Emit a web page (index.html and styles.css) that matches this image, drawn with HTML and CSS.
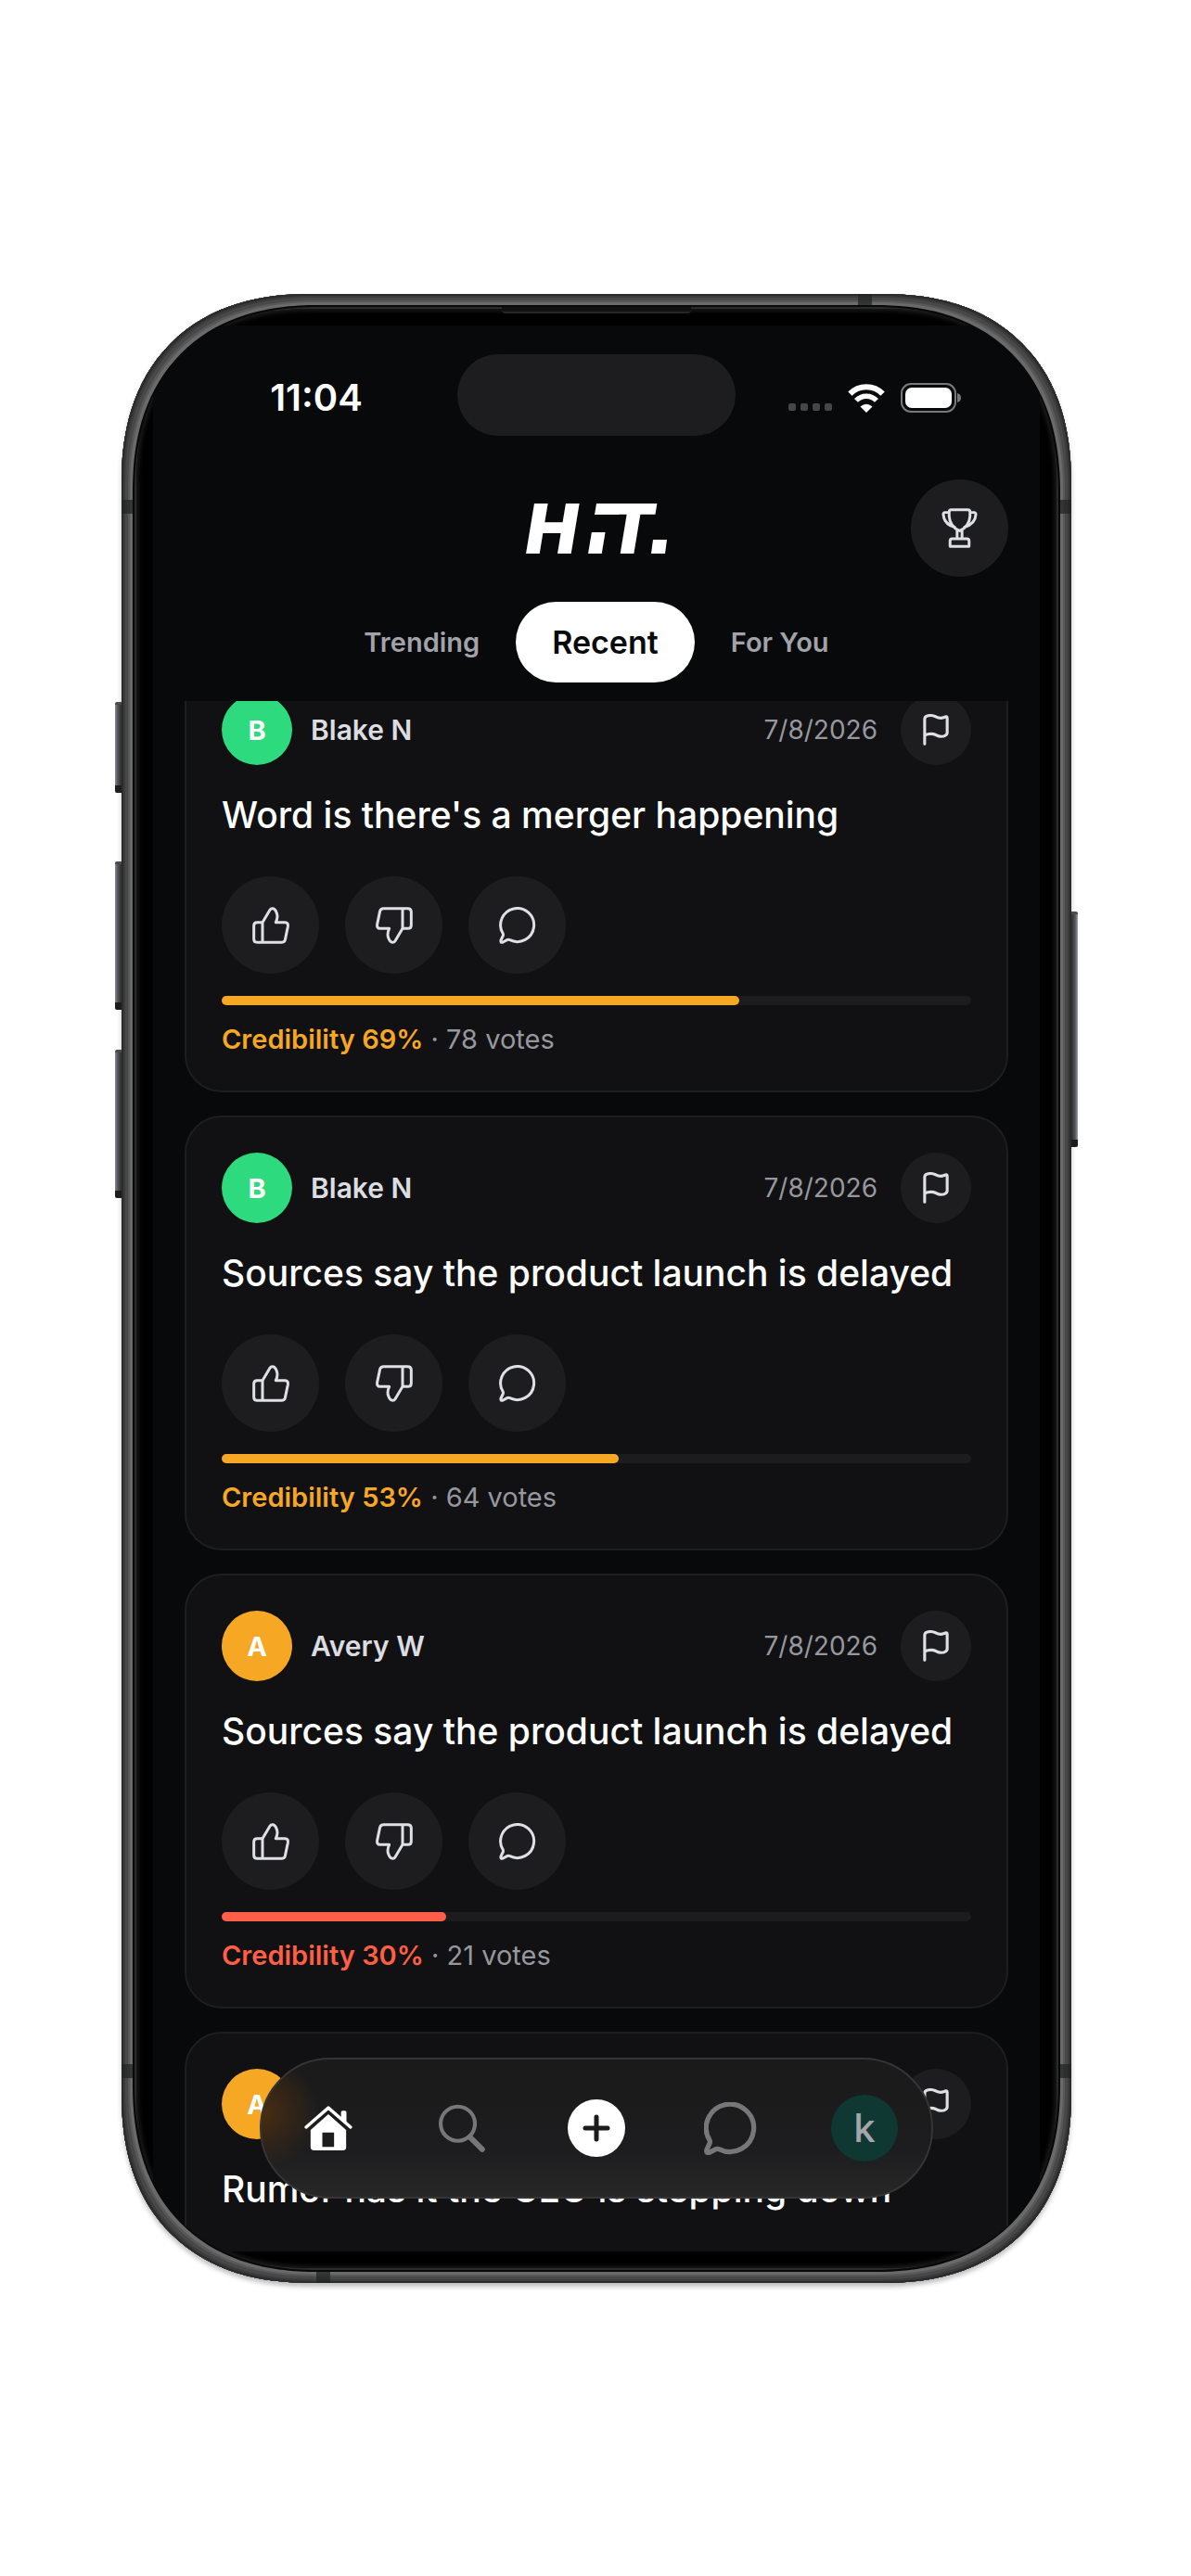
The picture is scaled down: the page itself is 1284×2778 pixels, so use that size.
FILE: index.html
```html
<!DOCTYPE html>
<html lang="en">
<head>
<meta charset="UTF-8">
<meta name="viewport" content="width=device-width, initial-scale=1.0">
<title>HiT. - Recent</title>
<link rel="stylesheet" href="styles.css">
</head>
<body>
<!-- shared icons -->
<svg class="sprite" aria-hidden="true">
  <symbol id="icon-up" viewBox="0 0 120 120">
    <path d="M33 50H16Q5 50 5 61V104Q5 115 17 115H94Q104 115 106 107L115 64Q117 50 106 50H76Q84 34 79 20Q74 5 65 5Q60 5 57 10L33 50V115"/>
  </symbol>
  <symbol id="icon-down" viewBox="0 0 120 120">
    <path transform="rotate(180 60 60)" d="M33 50H16Q5 50 5 61V104Q5 115 17 115H94Q104 115 106 107L115 64Q117 50 106 50H76Q84 34 79 20Q74 5 65 5Q60 5 57 10L33 50V115"/>
  </symbol>
  <symbol id="icon-chat" viewBox="0 0 120 120">
    <path d="M13 87A54 54 0 1 1 35 107Q30 105 26 107L13 114Q4 117 6 108L13 93Q14 90 13 87Z"/>
  </symbol>
  <symbol id="icon-flag" viewBox="0 0 80 98">
    <path d="M5 93V16Q5 8 13 6Q25 2 39 8Q52 15 64 11Q75 5 75 12V58Q75 65 67 68Q54 73 40 65Q24 58 5 66"/>
  </symbol>
  <symbol id="icon-trophy" viewBox="0 0 116 130">
    <path d="M31 5H85Q92 5 92 12V26Q90 60 58 74Q26 60 24 26V12Q24 5 31 5ZM24 14H11Q5 14 5 21Q7 52 42 62M92 14H105Q111 14 111 21Q109 52 74 62M50 73V99M66 73V99M34 100H82Q89 100 89 107V125H27V107Q27 100 34 100Z"/>
  </symbol>
</svg>

<main class="stage">
  <div class="phone">
    <span class="key key-action"></span>
    <span class="key key-volume-up"></span>
    <span class="key key-volume-down"></span>
    <span class="key key-power"></span>
    <span class="band band-top"></span>
    <span class="band band-bottom"></span>
    <span class="band band-left-top"></span>
    <span class="band band-left-bottom"></span>
    <span class="band band-right-top"></span>
    <span class="band band-right-bottom"></span>
    <span class="speaker"></span>

    <div class="bezel">
      <div class="screen">
        <div class="status-bar">
          <span class="time">11:04</span>
          <span class="island"></span>
          <div class="status-icons">
            <span class="dots"><i></i><i></i><i></i><i></i></span>
            <svg class="wifi" viewBox="0 0 116 90" aria-hidden="true">
              <path d="M7 31A71 71 0 0 1 109 31" fill="none" stroke="#fff" stroke-width="18"/>
              <path d="M26 52A44 44 0 0 1 90 52" fill="none" stroke="#fff" stroke-width="16"/>
              <path d="M58 90L39 71Q58 55 77 71Z" fill="#fff"/>
            </svg>
            <svg class="battery" viewBox="0 0 66 32" aria-hidden="true">
              <rect x="1" y="1" width="58" height="30" rx="10" fill="none" stroke="#78797b" stroke-width="2"/>
              <rect x="5" y="5" width="50" height="22" rx="7" fill="#fff"/>
              <path d="M61 11Q65 12 65 16Q65 20 61 21Z" fill="#78797b"/>
            </svg>
          </div>
        </div>

        <header class="top-bar">
          <svg class="logo" viewBox="0 0 160 70" role="img" aria-label="HiT.">
            <text class="logo-text" y="62" x="4 71 91">HIT</text>
            <path class="logo-shape" d="M90 8H106L104 20H88Z"/>
            <path class="logo-notch" d="M68 20H102L99 39H68Z"/>
            <path class="logo-shape" d="M141 47H156L154 62H139Z"/>
          </svg>
          <button class="round-button trophy-button" aria-label="Leaderboard"><svg class="trophy"><use href="#icon-trophy"/></svg></button>
        </header>

        <nav class="tabs">
          <button class="tab">Trending</button>
          <button class="tab active">Recent</button>
          <button class="tab">For You</button>
        </nav>

        <section class="feed">
          <article class="card">
            <div class="card-header">
              <span class="avatar green">B</span>
              <span class="name">Blake N</span>
              <span class="date">7/8/2026</span>
              <button class="round-button small" aria-label="Report"><svg class="flag"><use href="#icon-flag"/></svg></button>
            </div>
            <h2 class="rumor">Word is there's a merger happening</h2>
            <div class="actions">
              <button class="round-button" aria-label="Believe"><svg class="icon"><use href="#icon-up"/></svg></button>
              <button class="round-button" aria-label="Doubt"><svg class="icon"><use href="#icon-down"/></svg></button>
              <button class="round-button" aria-label="Comment"><svg class="icon"><use href="#icon-chat"/></svg></button>
            </div>
            <div class="meter"><div class="meter-fill orange" style="width: 69%"></div></div>
            <p class="credibility"><b class="orange-text">Credibility 69%</b> · 78 votes</p>
          </article>

          <article class="card">
            <div class="card-header">
              <span class="avatar green">B</span>
              <span class="name">Blake N</span>
              <span class="date">7/8/2026</span>
              <button class="round-button small" aria-label="Report"><svg class="flag"><use href="#icon-flag"/></svg></button>
            </div>
            <h2 class="rumor">Sources say the product launch is delayed</h2>
            <div class="actions">
              <button class="round-button" aria-label="Believe"><svg class="icon"><use href="#icon-up"/></svg></button>
              <button class="round-button" aria-label="Doubt"><svg class="icon"><use href="#icon-down"/></svg></button>
              <button class="round-button" aria-label="Comment"><svg class="icon"><use href="#icon-chat"/></svg></button>
            </div>
            <div class="meter"><div class="meter-fill orange" style="width: 53%"></div></div>
            <p class="credibility"><b class="orange-text">Credibility 53%</b> · 64 votes</p>
          </article>

          <article class="card">
            <div class="card-header">
              <span class="avatar orange">A</span>
              <span class="name">Avery W</span>
              <span class="date">7/8/2026</span>
              <button class="round-button small" aria-label="Report"><svg class="flag"><use href="#icon-flag"/></svg></button>
            </div>
            <h2 class="rumor">Sources say the product launch is delayed</h2>
            <div class="actions">
              <button class="round-button" aria-label="Believe"><svg class="icon"><use href="#icon-up"/></svg></button>
              <button class="round-button" aria-label="Doubt"><svg class="icon"><use href="#icon-down"/></svg></button>
              <button class="round-button" aria-label="Comment"><svg class="icon"><use href="#icon-chat"/></svg></button>
            </div>
            <div class="meter"><div class="meter-fill red" style="width: 30%"></div></div>
            <p class="credibility"><b class="red-text">Credibility 30%</b> · 21 votes</p>
          </article>

          <article class="card">
            <div class="card-header">
              <span class="avatar orange">A</span>
              <span class="name"></span>
              <button class="round-button small" aria-label="Report"><svg class="flag"><use href="#icon-flag"/></svg></button>
            </div>
            <h2 class="rumor">Rumor has it the CEO is stepping down</h2>
            <div class="actions"></div>
          </article>
        </section>

        <!-- floating nav over the feed -->
        <nav class="tab-bar">
          <button class="nav-item" aria-label="Home">
            <svg class="home" viewBox="0 0 152 140">
              <path d="M6 67L76 6L146 67" fill="none" stroke="#fff" stroke-width="10" stroke-linecap="round" stroke-linejoin="round"/>
              <path d="M116 40V20Q116 15 121 15H128Q133 15 133 20V56Z" fill="#fff"/>
              <path d="M76 26L132 76V129Q133 140 122 140H31Q20 140 20 129V76ZM57 84V129H94V84Z" fill="#fff" fill-rule="evenodd"/>
            </svg>
          </button>
          <button class="nav-item" aria-label="Search">
            <svg class="search" viewBox="0 0 146 152" fill="none" stroke="#77777a" stroke-linecap="round">
              <circle cx="60" cy="62" r="54" stroke-width="12"/>
              <path d="M98 104L137 143" stroke-width="17"/>
            </svg>
          </button>
          <button class="nav-item" aria-label="New post">
            <svg class="plus" viewBox="0 0 62 62">
              <circle cx="31" cy="31" r="31" fill="#fff"/>
              <path d="M31 19V43M19 31H43" stroke="#1c1c1d" stroke-width="5" stroke-linecap="round"/>
            </svg>
          </button>
          <button class="nav-item" aria-label="Chat"><svg class="chat"><use href="#icon-chat"/></svg></button>
          <button class="nav-item" aria-label="Profile"><span class="profile">k</span></button>
        </nav>
      </div>
    </div>
  </div>
</main>
</body>
</html>
```
FILE: styles.css
```css
* {
    box-sizing: border-box;
}
body {
    margin: 0;
    background-color: #fff;
    font-family: Inter, "Liberation Sans", sans-serif;
    color: #fff;
}
button {
    border: none;
    padding: 0;
    background: none;
    color: inherit;
    font-family: inherit;
    cursor: pointer;
}
.sprite {
    position: absolute;
    width: 0;
    height: 0;
}
.stage {
    padding: 317px 129px 316px 131px;
}

/* device */
.phone {
    position: relative;
    display: flex;
    aspect-ratio: 1024 / 2145;
    padding: 16px;
    border-radius: 180px;
    background-color: #000;
    box-shadow:
        inset 0 0 0 2px #2b2c2c,
        inset 0 0 0 4px #3b3b3b,
        inset 0 0 0 7px #484848,
        inset 0 0 0 9px #585858,
        inset 0 0 0 12px #6a6a6a,
        inset 0 0 0 14px #080808,
        inset 0 0 0 16px #2a2a2a,
        0 4px 5px rgba(40, 40, 50, 0.3);
}
.bezel {
    display: flex;
    flex: 1;
    min-width: 0;
    padding: 18px;
    border-radius: 164px;
    background-color: #000;
    overflow: hidden;
    box-shadow: inset 0 0 5px 2px #1d1d1d;
}
@supports (corner-shape: superellipse(1.2)) {
    .phone {
        border-radius: 204px;
        corner-shape: superellipse(1.2);
    }
    .bezel {
        border-radius: 188px;
        corner-shape: superellipse(1.2);
    }
}
.key {
    position: absolute;
    left: -7px;
    width: 7px;
    border-top: 3px solid #4a4b4d;
    border-bottom: 8px solid #1c1c1c;
    border-radius: 2px 0 0 2px;
    background: linear-gradient(90deg, #8a8b8e, #55575a 40%, #2c2d2e);
}
.key-action {
    top: 440px;
    height: 98px;
}
.key-volume-up {
    top: 612px;
    height: 160px;
}
.key-volume-down {
    top: 815px;
    height: 160px;
}
.key-power {
    left: auto;
    right: -7px;
    top: 666px;
    height: 254px;
    border-radius: 0 2px 2px 0;
    background: linear-gradient(270deg, #a0a1a4, #55575a 40%, #2c2d2e);
}
.band {
    position: absolute;
    width: 12px;
    height: 15px;
    background-color: rgba(35, 36, 36, 0.75);
}
.band-left-top, .band-left-bottom {
    left: 0;
}
.band-right-top, .band-right-bottom {
    right: 0;
}
.band-left-top, .band-right-top {
    top: 222px;
}
.band-left-bottom, .band-right-bottom {
    bottom: 221px;
}
.band-top, .band-bottom {
    width: 15px;
    height: 12px;
}
.band-top {
    top: 0;
    right: 215px;
}
.band-bottom {
    bottom: 0;
    left: 210px;
}
.speaker {
    position: absolute;
    top: 14px;
    left: 40%;
    right: 40%;
    height: 7px;
    border-bottom: 2px solid #262626;
    border-radius: 0 0 4px 4px;
    background-color: #101010;
}

/* screen */
.screen {
    position: relative;
    display: flex;
    flex-direction: column;
    flex: 1;
    min-width: 0;
    background-color: #08090b;
    overflow: hidden;
}
.status-bar {
    display: grid;
    grid-template-columns: 1fr 300px 1fr;
    align-items: center;
    padding-top: 31px;
}
.time {
    justify-self: center;
    padding: 6px 0 0 24px;
    font-size: 40px;
    font-weight: 600;
    line-height: 44px;
}
.island {
    height: 88px;
    border-radius: 44px;
    background-color: #1d1d1f;
}
.status-icons {
    display: flex;
    align-items: center;
    justify-content: flex-end;
    gap: 17px;
    padding: 6px 84px 0 0;
}
.dots {
    display: flex;
    align-self: flex-end;
    gap: 5px;
    padding-bottom: 2px;
}
.dots i {
    width: 8px;
    height: 8px;
    border-radius: 2px;
    background-color: #454648;
}
.wifi {
    width: 40px;
    height: 31px;
}
.battery {
    width: 66px;
    height: 32px;
}
.top-bar {
    display: grid;
    grid-template-columns: 1fr auto 1fr;
    align-items: center;
    padding: 47px 34px 0;
}
.logo {
    grid-column: 2;
    width: 160px;
    height: 70px;
    overflow: visible;
}
.logo-text {
    font-size: 74px;
    font-weight: 900;
    font-style: italic;
    fill: #fff;
}
.logo-shape {
    fill: #fff;
}
.logo-notch {
    fill: #08090b;
}
.round-button {
    display: flex;
    flex-shrink: 0;
    align-items: center;
    justify-content: center;
    width: 105px;
    height: 105px;
    border-radius: 50%;
    background-color: #1d1d1f;
}
.round-button svg, .chat {
    fill: none;
    stroke: #dfe0e3;
    stroke-width: 9;
    stroke-linecap: round;
    stroke-linejoin: round;
}
.round-button.small {
    width: 76px;
    height: 76px;
}
.trophy-button {
    justify-self: end;
}
.icon {
    width: 40px;
    height: 40px;
}
.flag {
    width: 28px;
    height: 34px;
}
.trophy {
    width: 39px;
    height: 43px;
}
.tabs {
    display: flex;
    justify-content: center;
    padding: 27px 0 20px;
}
.tab {
    height: 87px;
    padding: 0 39px;
    border-radius: 44px;
    color: #a1a3a9;
    font-size: 29px;
    font-weight: 600;
}
.tab.active {
    background-color: #fff;
    color: #08090b;
    font-size: 34px;
}

/* feed, scrolled a little under the tabs */
.feed {
    flex: 1;
    min-height: 0;
    padding: 0 34px;
    overflow: hidden;
}
.card:first-child {
    margin-top: -47px;
}
.card {
    margin-bottom: 25px;
    padding: 38px;
    border: 2px solid #1e1e20;
    border-radius: 40px;
    background-color: #111113;
}
.card-header {
    display: flex;
    align-items: center;
}
.avatar {
    display: flex;
    align-items: center;
    justify-content: center;
    width: 76px;
    height: 76px;
    border-radius: 50%;
    font-size: 29px;
    font-weight: 700;
}
.name {
    flex: 1;
    padding-left: 20px;
    color: #dcdde0;
    font-size: 30px;
    font-weight: 600;
}
.date {
    padding-right: 25px;
    color: #96989e;
    font-size: 28px;
}
.rumor {
    margin: 28px 0 40px;
    font-size: 39px;
    font-weight: 500;
    line-height: 52px;
    white-space: nowrap;
}
.actions {
    display: flex;
    gap: 28px;
    min-height: 105px;
}
.meter {
    height: 10px;
    margin: 24px 0 20px;
    border-radius: 5px;
    background-color: #1c1c1e;
}
.meter-fill {
    height: 100%;
    border-radius: 5px;
}
.credibility {
    margin: 0;
    color: #96989e;
    font-size: 29px;
    line-height: 34px;
}
.credibility b {
    font-weight: 600;
}
.green {
    background-color: #2dda7d;
}
.orange {
    background-color: #f6a724;
}
.red {
    background-color: #ff5f49;
}
.orange-text {
    color: #f6a724;
}
.red-text {
    color: #ff5f45;
}

/* bottom navigation */
.tab-bar {
    position: absolute;
    left: 12%;
    right: 12%;
    bottom: 57px;
    display: grid;
    grid-template-columns: repeat(5, 1fr);
    height: 152px;
    border: 2px solid #353536;
    border-radius: 76px;
    background:
        radial-gradient(circle at 0 38%, #4a2d12, rgba(74, 45, 18, 0) 62px),
        linear-gradient(#1a1a1a, #1d1d1f 65%, #272727);
}
.nav-item {
    display: flex;
    align-items: center;
    justify-content: center;
}
.home {
    width: 52px;
    height: 48px;
}
.search {
    width: 50px;
    height: 52px;
}
.plus {
    width: 62px;
    height: 62px;
}
.chat {
    width: 57px;
    height: 57px;
    stroke: #77777a;
    stroke-width: 11;
}
.profile {
    width: 72px;
    height: 72px;
    border-radius: 50%;
    background-color: #0e3831;
    color: #a4a6aa;
    font-size: 42px;
    font-weight: 500;
    line-height: 72px;
}
```
